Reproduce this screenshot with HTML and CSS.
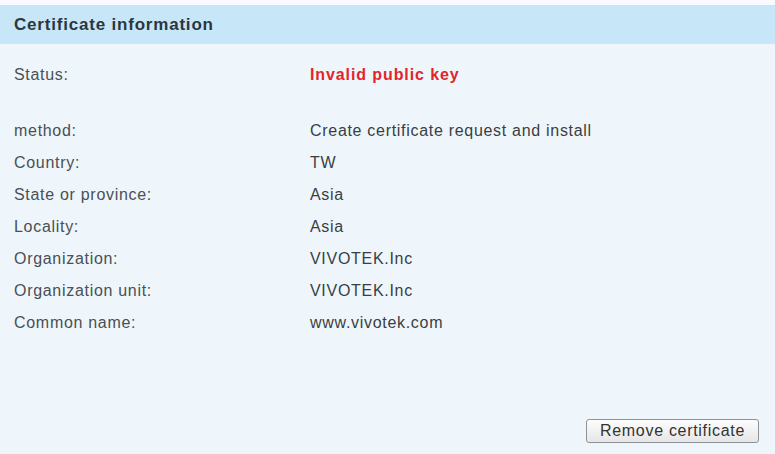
FILE: index.html
```html
<!DOCTYPE html>
<html>
<head>
    <meta charset='utf-8'>
    <title>Certificate information</title>
    <meta name='viewport' content='width=device-width, initial-scale=1'>
    <link rel="stylesheet" href="styles.css">
</head>
<body>
    <div class="panel">
        <div class="panel-head">Certificate information</div>

        <div class="info">
            <div class="row status-row">
                <span class="label">Status:</span>
                <span class="value invalid">Invalid public key</span>
            </div>
            <div class="row">
                <span class="label">method:</span>
                <span class="value">Create certificate request and install</span>
            </div>
            <div class="row">
                <span class="label">Country:</span>
                <span class="value">TW</span>
            </div>
            <div class="row">
                <span class="label">State or province:</span>
                <span class="value">Asia</span>
            </div>
            <div class="row">
                <span class="label">Locality:</span>
                <span class="value">Asia</span>
            </div>
            <div class="row">
                <span class="label">Organization:</span>
                <span class="value">VIVOTEK.Inc</span>
            </div>
            <div class="row">
                <span class="label">Organization unit:</span>
                <span class="value">VIVOTEK.Inc</span>
            </div>
            <div class="row">
                <span class="label">Common name:</span>
                <span class="value">www.vivotek.com</span>
            </div>
        </div>

        <div class="actions">
            <button class="btn">Remove certificate</button>
        </div>
    </div>
</body>
</html>
```

FILE: styles.css
```css
* {
    margin: 0;
    padding: 0;
    box-sizing: border-box;
}

body {
    font-family: "Liberation Sans", Arial, sans-serif;
    font-size: 16px;
    letter-spacing: 0.7px;
    color: #4a4f55;
    background: #f7fbfd;
    height: 454px;
    overflow: hidden;
}

.panel {
    margin-top: 5px;
    background: #eef6fb;
    height: 449px;
}

.panel-head {
    height: 39px;
    line-height: 40px;
    padding-left: 14px;
    background: #c7e7f9;
    color: #2b3640;
    font-size: 17px;
    font-weight: bold;
    letter-spacing: 0.8px;
}

.info {
    padding-top: 15px;
}

.row {
    display: grid;
    grid-template-columns: 310px 1fr;
    height: 32px;
    line-height: 32px;
}

.status-row {
    margin-bottom: 24px;
}

.label {
    padding-left: 14px;
}

.value {
    color: #3a3e43;
}

.invalid {
    color: #e3252b;
    font-weight: bold;
    letter-spacing: 0.9px;
}

.actions {
    display: flex;
    justify-content: flex-end;
    padding-top: 80px;
    padding-right: 16px;
}

.btn {
    width: 173px;
    height: 24px;
    font-family: "Liberation Sans", Arial, sans-serif;
    font-size: 16px;
    letter-spacing: 0.7px;
    color: #333;
    background: linear-gradient(#fdfdfd, #e6e6e6);
    border: 1px solid #8d9298;
    border-radius: 3px;
}
```
